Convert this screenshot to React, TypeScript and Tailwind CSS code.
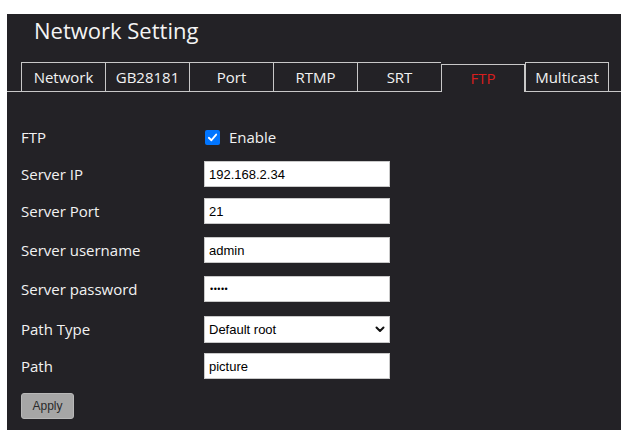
import React from "react";

const tabs = ["Network", "GB28181", "Port", "RTMP", "SRT", "FTP", "Multicast"];

function TextField({ value, type = "text" }: { value: string; type?: string }) {
  return (
    <input
      type={type}
      value={value}
      readOnly
      className="w-[186px] h-[26px] bg-white border border-[#c9c9c9] px-[4px] text-[13px] text-black outline-none"
      style={{ fontFamily: '"Liberation Sans", Arial, sans-serif' }}
    />
  );
}

function Row({ label, className, children }: { label: string; className: string; children: React.ReactNode }) {
  return (
    <div className={`flex items-center ${className}`}>
      <div className="w-[183px] text-[15px] text-[#f2f2f2]">{label}</div>
      {children}
    </div>
  );
}

export default function App() {
  return (
    <div className="w-[641px] h-[438px] bg-white pt-[14px] pl-[7px]" style={{ fontFamily: '"Open Sans", sans-serif' }}>
      <div className="w-[614px] h-[416px] bg-[#232226] pt-[1px] flex flex-col">
        <h1 className="pl-[27px] text-[22px] leading-[30px] text-[#f4f4f4]">Network Setting</h1>

        {/* tab strip */}
        <div className="mt-[17px] flex items-end h-[30px]">
          <div className="w-[14px] border-b border-[#c8c8c8]" />
          {tabs.map((t, i) => {
            const active = t === "FTP";
            return (
              <div
                key={t}
                className={`w-[84px] flex items-center justify-center text-[15px] border-t border-l border-[#c8c8c8] ${
                  i === tabs.length - 1 ? "border-r" : ""
                } ${active ? "h-[28px] border-r text-[#d81e1e]" : "h-[30px] border-b text-[#f2f2f2]"}`}
              >
                {t}
              </div>
            );
          })}
          <div className="flex-1 border-b border-[#c8c8c8]" />
        </div>

        {/* form */}
        <div className="pl-[14px] mt-[32px] flex flex-col">
          <Row label="FTP" className="h-[26px]">
            <span className="w-[15px] h-[15px] rounded-[2px] bg-[#0075ff] flex items-center justify-center ml-[1px]">
              <svg width="11" height="11" viewBox="0 0 12 12" fill="none">
                <path d="M2 6.3 L4.8 9 L10 2.8" stroke="white" strokeWidth="2" strokeLinecap="round" strokeLinejoin="round" />
              </svg>
            </span>
            <span className="ml-[9px] text-[15px] text-[#f2f2f2]">Enable</span>
          </Row>
          <Row label="Server IP" className="mt-[11px]">
            <TextField value="192.168.2.34" />
          </Row>
          <Row label="Server Port" className="mt-[11px]">
            <TextField value="21" />
          </Row>
          <Row label="Server username" className="mt-[13px]">
            <TextField value="admin" />
          </Row>
          <Row label="Server password" className="mt-[13px]">
            <input
              type="text"
              value="•••••"
              readOnly
              className="w-[186px] h-[26px] bg-white border border-[#c9c9c9] px-[5px] text-[9px] tracking-[0.5px] text-black outline-none"
              style={{ fontFamily: '"Liberation Sans", Arial, sans-serif' }}
            />
          </Row>
          <Row label="Path Type" className="mt-[14px]">
            <div className="relative">
              <select
                className="appearance-none w-[186px] h-[27px] bg-white border border-[#c9c9c9] px-[4px] text-[13px] text-black outline-none"
                style={{ fontFamily: '"Liberation Sans", Arial, sans-serif' }}
                defaultValue="root"
              >
                <option value="root">Default root</option>
              </select>
              <svg className="absolute right-[5px] top-[10px]" width="10" height="7" viewBox="0 0 10 7" fill="none">
                <path d="M1.5 1.5 L5 5 L8.5 1.5" stroke="#111" strokeWidth="2" strokeLinecap="round" strokeLinejoin="round" />
              </svg>
            </div>
          </Row>
          <Row label="Path" className="mt-[10px]">
            <TextField value="picture" />
          </Row>
          <div className="mt-[13px]">
            <button
              className="w-[53px] h-[26px] rounded-[3px] bg-[#a6a6a6] border border-[#b8b8b8] text-[12px] text-[#2a2a2a]"
              style={{ fontFamily: '"Liberation Sans", Arial, sans-serif' }}
            >
              Apply
            </button>
          </div>
        </div>
      </div>
    </div>
  );
}
